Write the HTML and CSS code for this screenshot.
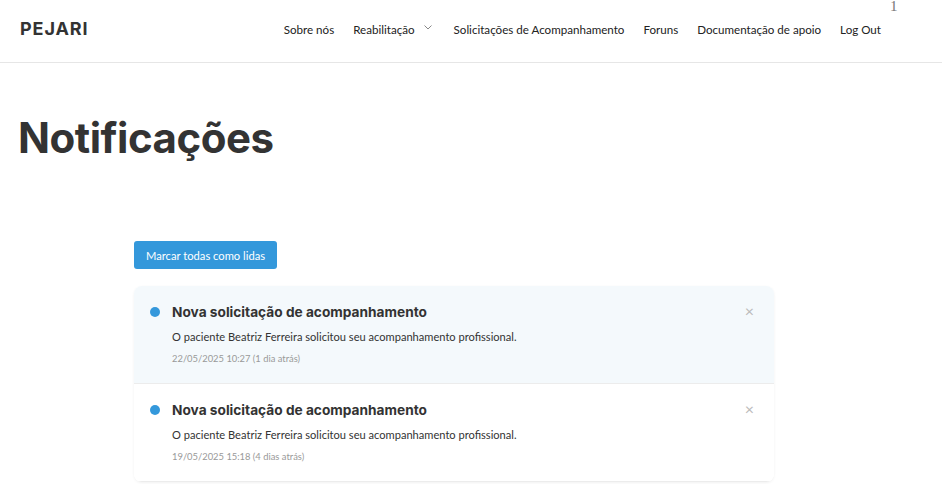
FILE: index.html
```html
<!DOCTYPE html>
<html lang="pt">
<head>
<meta charset="utf-8">
<title>Notificações</title>
<link rel="stylesheet" href="styles.css">
</head>
<body>
<header class="site-header">
  <div class="logo">PEJARI</div>
  <nav class="nav">
    <a class="nav-link">Sobre nós</a>
    <a class="nav-link has-sub">Reabilitação
      <svg class="chev" width="8" height="5" viewBox="0 0 8 5"><path d="M0.5 0.5 L4 4 L7.5 0.5" fill="none" stroke="#888" stroke-width="1"/></svg>
    </a>
    <a class="nav-link">Solicitações de Acompanhamento</a>
    <a class="nav-link">Foruns</a>
    <a class="nav-link">Documentação de apoio</a>
    <a class="nav-link">Log Out</a>
  </nav>
  <span class="badge">1</span>
</header>
<main class="main">
  <h1 class="page-title">Notificações</h1>
  <section class="content">
    <button class="btn">Marcar todas como lidas</button>
    <div class="list">
      <div class="item unread">
        <span class="dot"></span>
        <div class="item-body">
          <div class="item-title">Nova solicitação de acompanhamento</div>
          <div class="item-text">O paciente Beatriz Ferreira solicitou seu acompanhamento profissional.</div>
          <div class="item-date">22/05/2025 10:27 (1 dia atrás)</div>
        </div>
        <span class="close">×</span>
      </div>
      <div class="item">
        <span class="dot"></span>
        <div class="item-body">
          <div class="item-title">Nova solicitação de acompanhamento</div>
          <div class="item-text">O paciente Beatriz Ferreira solicitou seu acompanhamento profissional.</div>
          <div class="item-date">19/05/2025 15:18 (4 dias atrás)</div>
        </div>
        <span class="close">×</span>
      </div>
    </div>
  </section>
</main>
</body>
</html>
```
FILE: styles.css
```css
html, body { margin: 0; padding: 0; background: #fff; }
body { font-family: Lato, "Liberation Sans", sans-serif; color: #333; overflow: hidden; height: 484px; }

.site-header {
  position: relative;
  height: 62px;
  border-bottom: 1px solid #e6e6e6;
  display: flex;
  align-items: center;
  justify-content: space-between;
  padding: 0 61px 0 20px;
}
.logo {
  font-family: Inter, "DejaVu Sans", sans-serif;
  font-weight: 700;
  font-size: 18px;
  letter-spacing: 0.9px;
  color: #333;
  margin-top: -5px;
}
.nav { display: flex; gap: 19px; align-items: center; margin-top: -3px; }
.nav-link { font-size: 11.6px; color: #222; white-space: nowrap; display: flex; align-items: center; }
.chev { margin-left: 9px; margin-right: 3px; margin-top: -4px; }
.badge {
  position: absolute;
  top: -2px;
  left: 890px;
  font-family: "Liberation Serif", serif;
  font-size: 15px;
  line-height: 17px;
  color: #777;
}

.main { padding: 0 18px; }
.page-title {
  margin: 50px 0 0 0;
  font-family: Inter, "DejaVu Sans", sans-serif;
  font-weight: 700;
  font-size: 42px;
  letter-spacing: -0.5px;
  line-height: 50px;
  color: #333;
}
.content { width: 640px; margin: 78px 0 0 116px; }
.btn {
  font-family: Lato, sans-serif;
  background: #3498db;
  color: #fff;
  border: 0;
  border-radius: 3px;
  height: 28px;
  padding: 0 12px;
  font-size: 11.2px;
  cursor: pointer;
}
.list {
  margin-top: 17px;
  border-radius: 8px;
  box-shadow: 0 1px 3px rgba(0,0,0,0.06);
  overflow: hidden;
}
.item {
  display: flex;
  align-items: flex-start;
  padding: 17px 16px 0 16px;
  height: 80px;
  border-bottom: 1px solid #ececec;
  background: #fff;
}
.item.unread { background: #f4f9fc; }
.dot {
  width: 10px; height: 10px; border-radius: 50%;
  background: #3498db;
  margin-top: 4px;
  flex: none;
}
.item-body { flex: 1; margin-left: 12px; }
.item-title {
  font-family: Inter, "DejaVu Sans", sans-serif;
  font-weight: 700;
  font-size: 13.7px;
  line-height: 18px;
  color: #333;
}
.item-text { font-size: 11.1px; margin-top: 8px; line-height: 15px; color: #333; }
.item-date { font-size: 9.4px; color: #999; margin-top: 9px; line-height: 12px; }
.close { color: #bbb; font-size: 16px; line-height: 18px; margin-right: 4px; margin-top: -1px; }
```
